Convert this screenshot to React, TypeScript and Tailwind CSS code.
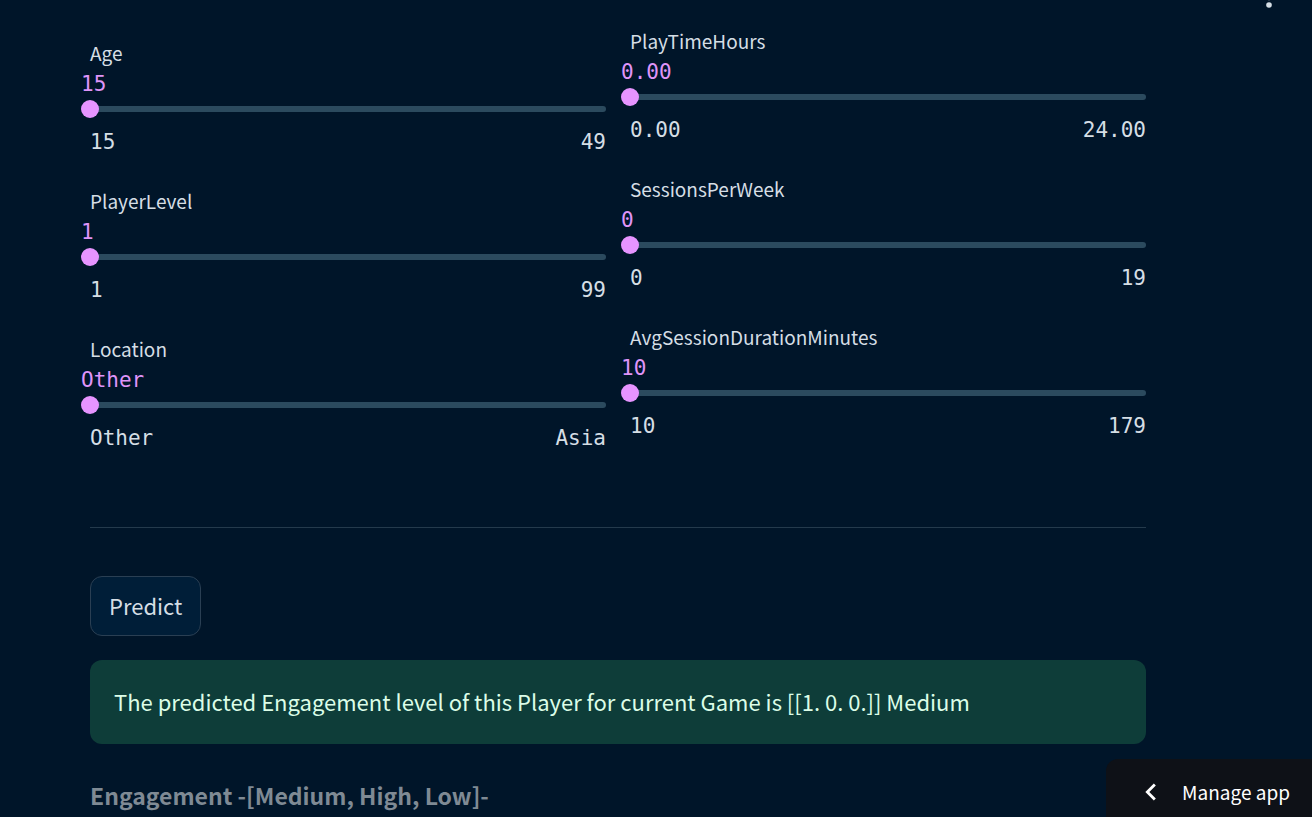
import { useId, useState } from "react";
import type { ReactNode } from "react";

type SliderProps = {
  label: string;
  min: number;
  max: number;
  step?: number;
  format?: (value: number) => string;
};

function Slider({ label, min, max, step = 1, format = String }: SliderProps) {
  const id = useId();
  const [value, setValue] = useState(min);
  const ratio = (value - min) / (max - min);

  return (
    <div className="flex flex-col">
      <label htmlFor={id} className="pb-0.5 text-[19px] leading-7">
        {label}
      </label>
      <div className="-mx-[9px] flex font-['DejaVu_Sans_Mono',monospace] text-[21px] leading-[30px] text-[#df94f8]">
        <div style={{ width: `${ratio * 95}%` }} />
        <output htmlFor={id}>{format(value)}</output>
      </div>
      <div className="grid h-5 items-center">
        <div className="col-start-1 row-start-1 h-1.5 overflow-hidden rounded-full bg-[#2b4a5e]">
          <div className="h-full bg-[#e694ff]" style={{ width: `${ratio * 100}%` }} />
        </div>
        <input
          id={id}
          type="range"
          min={min}
          max={max}
          step={step}
          value={value}
          onChange={(e) => setValue(Number(e.target.value))}
          className="col-start-1 row-start-1 -mx-[9px] h-[18px] cursor-pointer appearance-none bg-transparent [&::-webkit-slider-thumb]:size-[18px] [&::-webkit-slider-thumb]:appearance-none [&::-webkit-slider-thumb]:rounded-full [&::-webkit-slider-thumb]:bg-[#e694ff]"
        />
      </div>
      <div className="mt-2 flex justify-between font-['DejaVu_Sans_Mono',monospace] text-[21px] leading-[30px]">
        <span>{format(min)}</span>
        <span>{format(max)}</span>
      </div>
    </div>
  );
}

function Column({ children }: { children: ReactNode }) {
  return <div className="flex flex-col gap-[30px]">{children}</div>;
}

const hours = (value: number) => value.toFixed(2);
const locations = ["Other", "USA", "Europe", "Asia"];

export default function App() {
  return (
    <div className="min-h-screen bg-[#001529] font-['Noto_Sans_CJK_SC',sans-serif] text-[#d5dee5]">
      <button type="button" aria-label="Main menu" className="fixed -top-4 right-[31px] h-6 w-6">
        <svg viewBox="0 0 24 24" className="size-6" fill="currentColor">
          <circle cx="12" cy="6" r="2.8" />
          <circle cx="12" cy="13.5" r="2.8" />
          <circle cx="12" cy="21" r="2.8" />
        </svg>
      </button>

      <main className="pt-[27px] pr-[166px] pl-[90px]">
        <div className="grid grid-cols-2 gap-6">
          <div className="pt-3">
            <Column>
              <Slider label="Age" min={15} max={49} />
              <Slider label="PlayerLevel" min={1} max={99} />
              <Slider label="Location" min={0} max={3} format={(v) => locations[v]} />
            </Column>
          </div>
          <Column>
            <Slider label="PlayTimeHours" min={0} max={24} step={0.01} format={hours} />
            <Slider label="SessionsPerWeek" min={0} max={19} />
            <Slider label="AvgSessionDurationMinutes" min={10} max={179} />
          </Column>
        </div>

        <hr className="mt-[74px] mb-12 border-[#243a4c]" />

        <button
          type="button"
          className="h-[60px] rounded-xl border border-[#2a3f53] bg-[#001e38] px-[18px] pb-0.5 text-[22px]"
        >
          Predict
        </button>

        <div role="alert" className="mt-6 rounded-xl bg-[#0e3d39] px-6 pt-[23px] pb-[25px] text-[22px] leading-9 text-[#dcfde8]">
          <p>The predicted Engagement level of this Player for current Game is [[1. 0. 0.]] Medium</p>
        </div>

        <h2 className="mt-8 text-[23px] leading-[38px] font-bold text-[#7f8a94]">
          Engagement -[Medium, High, Low]-
        </h2>
      </main>

      <button
        type="button"
        className="fixed right-0 bottom-0 flex h-[58px] items-center gap-3.5 rounded-tl-xl bg-[#0e1117] pt-2 pr-[22px] pl-7 text-[19px] text-white"
      >
        <svg viewBox="0 0 24 24" className="size-[34px]" fill="currentColor">
          <path d="M15.41 7.41 14 6l-6 6 6 6 1.41-1.41L10.83 12z" />
        </svg>
        Manage app
      </button>
    </div>
  );
}
